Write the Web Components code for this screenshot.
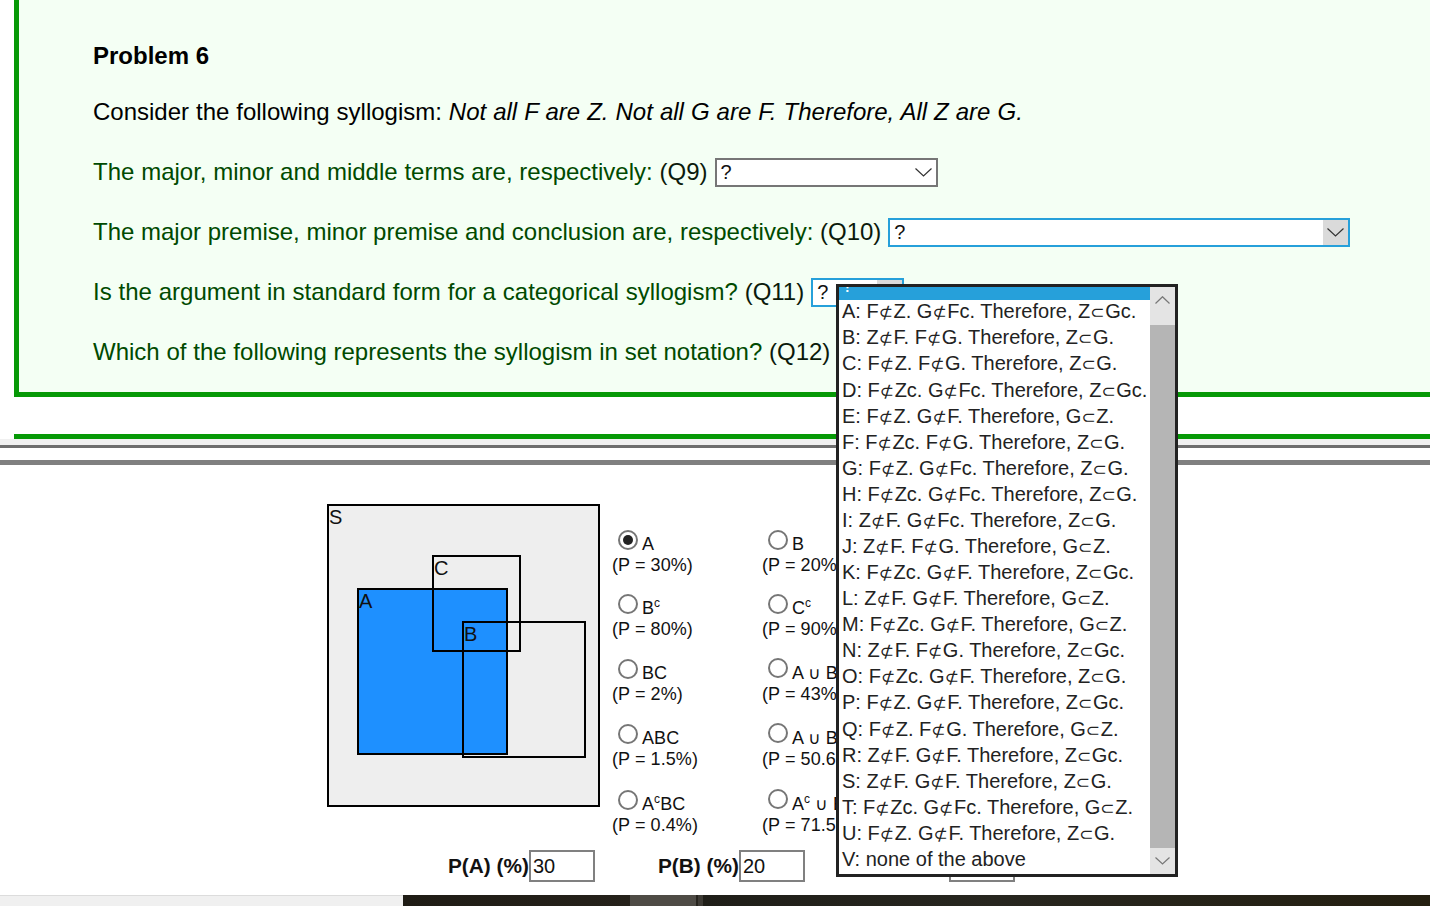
<!DOCTYPE html>
<html><head><meta charset="utf-8">
<style>
html,body{margin:0;padding:0;background:#fff;height:906px;overflow:hidden;font-family:"Liberation Sans",Arial,sans-serif;color:#000}
</style></head>
<body>
<x-page>
  <x-panel>
    <x-line size="28"><b>Problem 6</b></x-line>
    <x-line size="28" gap="28"><span><span style="word-spacing:.25px">Consider the following syllogism: </span><i style="word-spacing:.35px">Not all F are Z. Not all G are F. Therefore, All Z are G.</i></span></x-line>
    <x-line green gap="32" ws=".12"><span>The major, minor and middle terms are, respectively: <span style="color:#0b1a0b">(Q9)</span></span><x-select w="223"></x-select></x-line>
    <x-line green gap="31" ws="0"><span>The major premise, minor premise and conclusion are, respectively: <span style="color:#0b1a0b">(Q10)</span></span><x-select w="462" focus></x-select></x-line>
    <x-line green gap="31" ws=".2"><span>Is the argument in standard form for a categorical syllogism? <span style="color:#0b1a0b">(Q11)</span></span><x-select w="93" focus></x-select></x-line>
    <x-line green gap="31" ws=".1"><span>Which of the following represents the syllogism in set notation? <span style="color:#0b1a0b">(Q12)</span></span></x-line>
  </x-panel>
  <x-rules></x-rules>
  <x-work>
    <x-venn></x-venn>
    <x-options>
      <x-opt p="30%" checked>A</x-opt>
      <x-opt p="20%">B</x-opt>
      <x-opt p="80%">B<sup>c</sup></x-opt>
      <x-opt p="90%">C<sup>c</sup></x-opt>
      <x-opt p="2%">BC</x-opt>
      <x-opt p="43%" raise>A <small>∪</small> B</x-opt>
      <x-opt p="1.5%">ABC</x-opt>
      <x-opt p="50.6%" raise>A <small>∪</small> B</x-opt>
      <x-opt p="0.4%">A<sup>c</sup>BC</x-opt>
      <x-opt p="71.5%" raise>A<sup>c</sup> <small>∪</small> B</x-opt>
    </x-options>
  </x-work>
  <x-inputs>
    <x-num label="P(A) (%)" value="30"></x-num>
    <x-num label="P(B) (%)" value="20"></x-num>
    <x-num value=""></x-num>
  </x-inputs>
  <x-strip></x-strip>
  <x-menu>
    <div>?</div>
    <div>A: F⊄Z. G⊄Fc. Therefore, Z⊂Gc.</div>
    <div>B: Z⊄F. F⊄G. Therefore, Z⊂G.</div>
    <div>C: F⊄Z. F⊄G. Therefore, Z⊂G.</div>
    <div>D: F⊄Zc. G⊄Fc. Therefore, Z⊂Gc.</div>
    <div>E: F⊄Z. G⊄F. Therefore, G⊂Z.</div>
    <div>F: F⊄Zc. F⊄G. Therefore, Z⊂G.</div>
    <div>G: F⊄Z. G⊄Fc. Therefore, Z⊂G.</div>
    <div>H: F⊄Zc. G⊄Fc. Therefore, Z⊂G.</div>
    <div>I: Z⊄F. G⊄Fc. Therefore, Z⊂G.</div>
    <div>J: Z⊄F. F⊄G. Therefore, G⊂Z.</div>
    <div>K: F⊄Zc. G⊄F. Therefore, Z⊂Gc.</div>
    <div>L: Z⊄F. G⊄F. Therefore, G⊂Z.</div>
    <div>M: F⊄Zc. G⊄F. Therefore, G⊂Z.</div>
    <div>N: Z⊄F. F⊄G. Therefore, Z⊂Gc.</div>
    <div>O: F⊄Zc. G⊄F. Therefore, Z⊂G.</div>
    <div>P: F⊄Z. G⊄F. Therefore, Z⊂Gc.</div>
    <div>Q: F⊄Z. F⊄G. Therefore, G⊂Z.</div>
    <div>R: Z⊄F. G⊄F. Therefore, Z⊂Gc.</div>
    <div>S: Z⊄F. G⊄F. Therefore, Z⊂G.</div>
    <div>T: F⊄Zc. G⊄Fc. Therefore, G⊂Z.</div>
    <div>U: F⊄Z. G⊄F. Therefore, Z⊂G.</div>
    <div>V: none of the above</div>
  </x-menu>
</x-page>
<script>
function def(name, css, html, init){
  customElements.define(name, class extends HTMLElement{
    constructor(){super();const r=this.attachShadow({mode:'open'});r.innerHTML='<style>'+css+'</style>'+(typeof html==='function'?html(this):html);}
    connectedCallback(){ if(init) init(this); }
  });
}
const chevron=(w,h,c)=>`<svg width="${w}" height="${h}" viewBox="0 0 ${w} ${h}" style="display:block"><path d="M.5 .5 L${w/2} ${h-1} L${w-.5} .5" fill="none" stroke="${c}" stroke-width="1.2"/></svg>`;

def('x-page',':host{display:block;position:relative;width:1430px;height:906px;overflow:hidden}','<slot></slot>');

def('x-panel',`:host{display:flex;flex-direction:column;box-sizing:border-box;height:397px;margin-left:14px;padding:42px 0 0 74px;background:#f4fff4;border-left:5px solid #069906;border-bottom:5px solid #069906;font-size:24px}`,'<slot></slot>');

customElements.define('x-line',class extends HTMLElement{
  constructor(){super();const r=this.attachShadow({mode:'open'});
    r.innerHTML=`<style>:host{display:flex;align-items:flex-start;gap:7px;height:29px;line-height:28px;white-space:pre;color:#000;flex:none}
    :host([size="28"]){height:28px}:host([green]){color:#004a00}</style><slot></slot>`;}
  connectedCallback(){this.style.marginTop=(this.getAttribute('gap')||0)+'px';if(this.hasAttribute('ws'))this.style.wordSpacing=this.getAttribute('ws')+'px';}
});

customElements.define('x-select',class extends HTMLElement{
  constructor(){super();const r=this.attachShadow({mode:'open'});const f=this.hasAttribute('focus');
    r.innerHTML=`<style>:host{display:flex;box-sizing:border-box;height:29px;border:2px solid ${f?'#26a0da':'#767676'};background:#fff;font-size:20px;line-height:25px;color:#111;flex:none}
    .v{flex:1;padding-left:4px}.b{width:25px;display:flex;align-items:center;justify-content:center;${f?'background:#dadada;':''}}</style>
    <div class="v">?</div><div class="b">${chevron(17,9,'#333')}</div>`;}
  connectedCallback(){this.style.width=this.getAttribute('w')+'px';}
});

def('x-rules',`:host{display:block;box-sizing:border-box;height:68px;padding-top:37px}
 .g{margin-left:14px;height:5px;background:#069906}
 .a{height:6px;background:#f0f0f0}
 .b{height:3px;background:#6e6e6e}
 .c{height:12px;background:#fff}
 .d{height:5px;background:#808080}`,
 '<div class="g"></div><div class="a"></div><div class="b"></div><div class="c"></div><div class="d"></div>');

def('x-work',`:host{display:flex;height:385px;box-sizing:border-box;padding:39px 0 0 327px;font-size:18px}`,'<slot></slot>');

def('x-venn',`:host{display:block;position:relative;flex:none;width:273px;height:303px;font-size:20px;line-height:22px;color:#111}
 .r{position:absolute;box-sizing:border-box;border:2px solid #000;padding-left:0}
 .s{left:0;top:0;width:273px;height:303px;background:#eee}
 .a{left:30px;top:84px;width:151px;height:167px;background:#1e90ff}
 .c{left:105px;top:51px;width:89px;height:97px;line-height:23px}
 .b{left:135px;top:117px;width:124px;height:137px}`,
 '<div class="r s">S</div><div class="r a">A</div><div class="r c">C</div><div class="r b">B</div>');

def('x-options',`:host{display:grid;grid-template-columns:150px 150px;grid-template-rows:64px 65px 65px 66px 40px;margin:26px 0 0 12px;flex:none}`,'<slot></slot>');

customElements.define('x-opt',class extends HTMLElement{
  constructor(){super();const r=this.attachShadow({mode:'open'});const c=this.hasAttribute('checked');const up=this.hasAttribute('raise');
    r.innerHTML=`<style>:host{display:block;font-size:18px;line-height:21px;color:#111;letter-spacing:.08px}
    .t{display:flex;height:25px;align-items:flex-end;white-space:pre}
    .o{flex:none;box-sizing:border-box;width:20px;height:20px;margin:0 4px ${up?6:5}px 6px;border-radius:50%;border:2px solid #767676;background:#fff;display:flex;align-items:center;justify-content:center}
    .o i{width:10px;height:10px;border-radius:50%;background:#222;display:${c?'block':'none'}}
    ::slotted(sup){font-size:12px;line-height:0;vertical-align:7px}
    ::slotted(small){font-size:17px;font-family:"DejaVu Sans",sans-serif}</style>
    <div class="t"><span class="o"><i></i></span><span><slot></slot></span></div><div>(P = ${this.getAttribute('p')})</div>`;}
});

def('x-inputs',`:host{display:flex;padding-left:448px;height:45px;box-sizing:border-box}`,'<slot></slot>');

customElements.define('x-num',class extends HTMLElement{
  constructor(){super();const r=this.attachShadow({mode:'open'});
    const l=this.getAttribute('label')||'';
    r.innerHTML=`<style>:host{display:flex;width:210px;height:32px;align-items:center;font-size:20px;color:#111}
    b{width:81px;flex:none;white-space:pre;font-size:20.8px}
    .i{box-sizing:border-box;width:66px;height:32px;border:2px solid #808080;background:#fff;padding-left:2px;line-height:28px}</style>
    <b>${l}</b><div class="i">${this.getAttribute('value')||''}</div>`;}
});

def('x-strip',`:host{display:flex;height:11px;position:absolute;left:0;right:0;bottom:0}
 .l{width:403px;background:#f0f0f0;border-top:1px solid #dcdcdc;box-sizing:border-box}
 .d{background:linear-gradient(90deg,#1f1c15,#25211a)}
 .m{width:66px;background:#4e4b45}.n{width:2px;background:#26231d}.o{width:5px;background:#3d3a34}
 .e{flex:1;background:linear-gradient(90deg,#1f1e18,#27261f 40%,#241f10)}`,
 '<div class="l"></div><div class="d" style="width:227px"></div><div class="m"></div><div class="n"></div><div class="o"></div><div class="e"></div>');

customElements.define('x-menu',class extends HTMLElement{
  constructor(){super();
    const rows=[...this.querySelectorAll('div')];
    const r=this.attachShadow({mode:'open'});
    const fmt=s=>s.replace(/[⊄⊂]/g,m=>`<span class="g">${m}</span>`);
    r.innerHTML=`<style>
    :host{position:absolute;left:836px;top:284px;box-sizing:border-box;width:342px;height:593px;border:3px solid #222;background:#fff;display:flex;font-size:20px;color:#222}
    .l{width:311px;flex:none;overflow:hidden;height:587px}
    .s{margin-top:-12.8px}
    .row{height:26.09px;line-height:22px;padding-left:3px;white-space:pre;box-sizing:border-box}
    .row.h{background:#26a0da;color:#fff}
    .g{font-family:"DejaVu Sans",sans-serif;font-size:17px;letter-spacing:.6px}
    .bar{flex:1;display:flex;flex-direction:column;background:#b5b5b5}
    .btn{background:#e4e4e4;display:flex;align-items:center;justify-content:center}
    .up{height:38px;align-items:flex-start;padding-top:9px;box-sizing:border-box}.dn{height:26px;margin-top:auto}
    </style>
    <div class="l"><div class="s">${rows.map((d,i)=>`<div class="row${i?'':' h'}">${fmt(d.textContent)}</div>`).join('')}</div></div>
    <div class="bar"><div class="btn up"><svg width="15" height="8" viewBox="0 0 15 8" style="display:block"><path d="M.5 7.5 L7.5 .7 L14.5 7.5" fill="none" stroke="#777" stroke-width="1.2"/></svg></div><div class="btn dn">${chevron(15,8,'#777')}</div></div>`;
  }
});
</script>
</body></html>
